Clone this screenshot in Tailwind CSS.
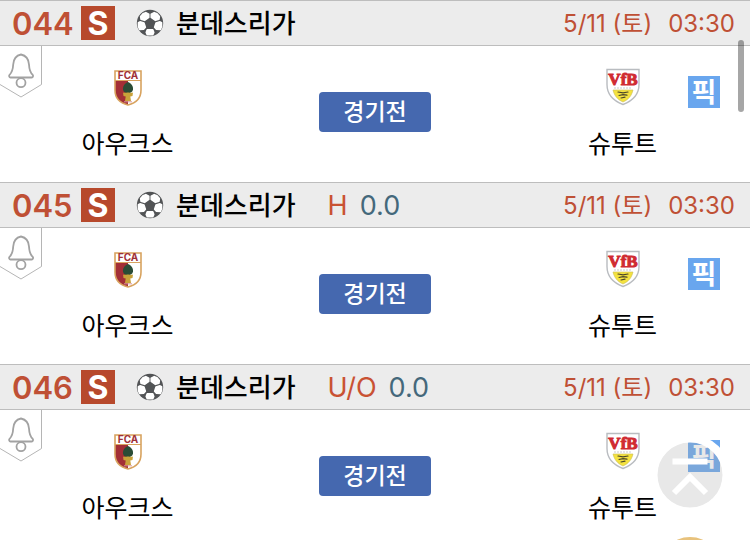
<!DOCTYPE html>
<html lang="ko">
<head>
  <meta charset="UTF-8">
  <meta name="viewport" content="width=device-width, initial-scale=1.0">
  <title>경기 목록</title>
  <script src="https://cdn.jsdelivr.net/npm/@tailwindcss/browser@4"></script>
</head>
<body class="bg-white text-black font-['Inter','Noto_Sans_CJK_KR',sans-serif]">

  <!-- Shared icons -->
  <svg class="hidden" aria-hidden="true">
    <symbol id="ball" viewBox="0 0 28 28">
      <circle cx="14" cy="14" r="13.200" fill="#525456"/>
      <g fill="#fff" stroke="#fff" stroke-width="1.500" stroke-linejoin="round">
        <path d="M7 4.800l2.800-1.200 3 1.600v3.200l-4.200 3L5 10.200 4.600 7.600z"/>
        <path d="M21 4.800l-2.800-1.200-3 1.600v3.200l4.200 3 3.600-1.200.4-2.600z"/>
        <path d="M2.400 13.600l1.600-.8 4 1.200 1.400 4.200-1.800 2-4 .2-1.200-3z"/>
        <path d="M25.600 13.600l-1.600-.8-4 1.200-1.400 4.200 1.800 2 4 .2 1.200-3z"/>
        <path d="M11.200 20.800h5.600l1 2.600-1 2.400h-5.600l-1-2.400z"/>
      </g>
    </symbol>
    <symbol id="bell" viewBox="0 0 42 53">
      <path d="M41.500 0v38.500L21 51 0 38.500" fill="none" stroke="#b5b5b5"/>
      <path d="M21 8.500c-5.500 1.200-7.500 5-7.800 10-.3 6-1.200 8-3.700 10.300-.8.800-.3 2.700 1 2.700h21.200c1.300 0 1.800-1.900 1-2.700-2.700-2.300-3.400-4.300-3.700-10.300-.3-5-2.500-8.800-8-10z" fill="none" stroke="#a2a2a2" stroke-width="1.800" stroke-linejoin="round"/>
      <circle cx="21" cy="36.700" r="4.500" fill="#fff" stroke="#a2a2a2" stroke-width="1.800"/>
    </symbol>
    <symbol id="augsburg" viewBox="0 0 28 36">
      <path d="M1 1h26v19c0 8-4.500 13-13 15C5.500 33 1 28 1 20z" fill="#fff"/>
      <path d="M1 11h13v24C5.500 33 1 28 1 20z" fill="#a32f36"/>
      <path d="M1 1h26v19c0 8-4.500 13-13 15C5.500 33 1 28 1 20z" fill="none" stroke="#d8a35f" stroke-width="1.600"/>
      <path d="M1 10.500h26" stroke="#d8a35f"/>
      <text x="14" y="9.300" text-anchor="middle" font-family="Inter" font-size="10" font-weight="700" fill="#9f3138">FCA</text>
      <path d="M14 12c3.200 1 5.400 4.300 5 7.500-.4 2.500-2.500 3.800-5 3.800s-4.600-1.300-5-3.800c-.4-3.200 1.800-6.500 5-7.500z" fill="#2a4c36"/>
      <path d="M9 22.500c2 1 3.500-.5 5 0 1.500-.5 3 1 5 0l-.5 3.500-2.200.5.7 4.500h-6l.7-4.500-2.200-.5z" fill="#c9a23a"/>
      <path d="M10 31.800h8" stroke="#d9969b"/>
    </symbol>
    <symbol id="stuttgart" viewBox="0 0 34 37">
      <path d="M1 1h32v15c0 10-5.500 16-16 20C6.500 32 1 26 1 16z" fill="#fff" stroke="#b9bcc0" stroke-width="1.400"/>
      <path d="M7 21.500h20c-1.500 6-4.500 9.500-10 12-5.500-2.500-8.500-6-10-12z" fill="#f4e23f" stroke="#c9bd55" stroke-width=".6"/>
      <text x="17" y="16.500" text-anchor="middle" font-family="Liberation Serif" font-size="17" font-weight="700" fill="#d02b32" stroke="#d02b32" stroke-width="1">VfB</text>
      <path d="M8 19.500h18" stroke="#c9c9c9" stroke-dasharray="2 1"/>
      <path d="M12 23.500l5 .8 5-.8M13 27l4-.8 4 .4M15 29.500l4-.8" fill="none" stroke="#4a452a" stroke-width="1.200" stroke-linecap="round"/>
    </symbol>
  </svg>

  <main class="h-screen overflow-hidden">
    <!-- Match 044 -->
    <article class="relative">
      <header class="flex h-[46px] items-center border-y border-[#bdbdbd] bg-[#ececec] pl-3 pr-[15px]">
        <span class="w-[69px] pt-0.5 text-[31px] leading-8 font-semibold text-[#bf5035]">044</span>
        <span class="flex size-[34px] items-center justify-center bg-[#b7492c] pt-0.5 text-[32px] leading-8 font-bold text-white">S</span>
        <svg class="ml-[21px] size-7" role="img" aria-label="축구"><use href="#ball"/></svg>
        <h2 class="ml-3 pt-0.5 text-[26px] leading-8 font-medium">분데스리가</h2>
        <time class="ml-auto flex gap-4 pt-0.5 text-2xl text-[#bf5035]"><span>5/11 (토)</span><span>03:30</span></time>
      </header>
      <div class="flex h-[136px]">
        <div class="flex w-[34%] flex-col items-center pt-6">
          <svg class="h-9 w-7" role="img" aria-label="FCA"><use href="#augsburg"/></svg>
          <p class="mt-5 text-[25px] leading-9">아우크스</p>
        </div>
        <div class="flex w-[32%] justify-center pt-[46px]">
          <button class="h-10 w-28 rounded-sm bg-[#4568af] text-[23px] leading-8 font-medium text-white">경기전</button>
        </div>
        <div class="flex w-[34%] flex-col items-center pt-[22px]">
          <svg class="h-[38px] w-[34px]" role="img" aria-label="VfB"><use href="#stuttgart"/></svg>
          <p class="mt-5 text-[25px] leading-9">슈투트</p>
        </div>
      </div>
      <button class="absolute left-0 top-[46px]" aria-label="알림"><svg class="h-[53px] w-[42px]"><use href="#bell"/></svg></button>
      <button class="absolute right-[30px] top-[76px] flex size-8 items-center justify-center bg-[#69a6ee] pt-0.5 text-[27px] leading-8 font-bold text-white">픽</button>
    </article>

    <!-- Match 045 -->
    <article class="relative">
      <header class="flex h-[46px] items-center border-y border-[#bdbdbd] bg-[#ececec] pl-3 pr-[15px]">
        <span class="w-[69px] pt-0.5 text-[31px] leading-8 font-semibold text-[#bf5035]">045</span>
        <span class="flex size-[34px] items-center justify-center bg-[#b7492c] pt-0.5 text-[32px] leading-8 font-bold text-white">S</span>
        <svg class="ml-[21px] size-7" role="img" aria-label="축구"><use href="#ball"/></svg>
        <h2 class="ml-3 pt-0.5 text-[26px] leading-8 font-medium">분데스리가</h2>
        <p class="ml-8 flex gap-3 pt-0.5 text-[27px] leading-8"><span class="text-[#c95233]">H</span><span class="text-[#44687b]">0.0</span></p>
        <time class="ml-auto flex gap-4 pt-0.5 text-2xl text-[#bf5035]"><span>5/11 (토)</span><span>03:30</span></time>
      </header>
      <div class="flex h-[136px]">
        <div class="flex w-[34%] flex-col items-center pt-6">
          <svg class="h-9 w-7" role="img" aria-label="FCA"><use href="#augsburg"/></svg>
          <p class="mt-5 text-[25px] leading-9">아우크스</p>
        </div>
        <div class="flex w-[32%] justify-center pt-[46px]">
          <button class="h-10 w-28 rounded-sm bg-[#4568af] text-[23px] leading-8 font-medium text-white">경기전</button>
        </div>
        <div class="flex w-[34%] flex-col items-center pt-[22px]">
          <svg class="h-[38px] w-[34px]" role="img" aria-label="VfB"><use href="#stuttgart"/></svg>
          <p class="mt-5 text-[25px] leading-9">슈투트</p>
        </div>
      </div>
      <button class="absolute left-0 top-[46px]" aria-label="알림"><svg class="h-[53px] w-[42px]"><use href="#bell"/></svg></button>
      <button class="absolute right-[30px] top-[76px] flex size-8 items-center justify-center bg-[#69a6ee] pt-0.5 text-[27px] leading-8 font-bold text-white">픽</button>
    </article>

    <!-- Match 046 -->
    <article class="relative">
      <header class="flex h-[46px] items-center border-y border-[#bdbdbd] bg-[#ececec] pl-3 pr-[15px]">
        <span class="w-[69px] pt-0.5 text-[31px] leading-8 font-semibold text-[#bf5035]">046</span>
        <span class="flex size-[34px] items-center justify-center bg-[#b7492c] pt-0.5 text-[32px] leading-8 font-bold text-white">S</span>
        <svg class="ml-[21px] size-7" role="img" aria-label="축구"><use href="#ball"/></svg>
        <h2 class="ml-3 pt-0.5 text-[26px] leading-8 font-medium">분데스리가</h2>
        <p class="ml-8 flex gap-3 pt-0.5 text-[27px] leading-8"><span class="text-[#c95233]">U/O</span><span class="text-[#44687b]">0.0</span></p>
        <time class="ml-auto flex gap-4 pt-0.5 text-2xl text-[#bf5035]"><span>5/11 (토)</span><span>03:30</span></time>
      </header>
      <div class="flex h-[136px]">
        <div class="flex w-[34%] flex-col items-center pt-6">
          <svg class="h-9 w-7" role="img" aria-label="FCA"><use href="#augsburg"/></svg>
          <p class="mt-5 text-[25px] leading-9">아우크스</p>
        </div>
        <div class="flex w-[32%] justify-center pt-[46px]">
          <button class="h-10 w-28 rounded-sm bg-[#4568af] text-[23px] leading-8 font-medium text-white">경기전</button>
        </div>
        <div class="flex w-[34%] flex-col items-center pt-[22px]">
          <svg class="h-[38px] w-[34px]" role="img" aria-label="VfB"><use href="#stuttgart"/></svg>
          <p class="mt-5 text-[25px] leading-9">슈투트</p>
        </div>
      </div>
      <button class="absolute left-0 top-[46px]" aria-label="알림"><svg class="h-[53px] w-[42px]"><use href="#bell"/></svg></button>
      <button class="absolute right-[30px] top-[76px] flex size-8 items-center justify-center bg-[#69a6ee] pt-0.5 text-[27px] leading-8 font-bold text-white">픽</button>
    </article>
  </main>

  <!-- Scroll thumb -->
  <div class="fixed right-1.5 top-10 h-[72px] w-1.5 rounded-full bg-black/35"></div>

  <!-- Floating buttons -->
  <button class="fixed bottom-[22px] right-[17px]" aria-label="맨 위로">
    <svg class="size-[86px]" viewBox="0 0 86 86" fill="none">
      <circle cx="43" cy="43" r="33" fill="#aaa" fill-opacity=".27"/>
      <circle cx="43" cy="43" r="36.500" stroke="#fff" stroke-width="8"/>
      <path d="M25.500 29.500h35M27 61l16-16 16 16" stroke="#fff" stroke-width="6"/>
    </svg>
  </button>
  <button class="fixed -bottom-[61px] right-7 size-16 rounded-full bg-[#e8c27c]" aria-label="메뉴"></button>
</body>
</html>
